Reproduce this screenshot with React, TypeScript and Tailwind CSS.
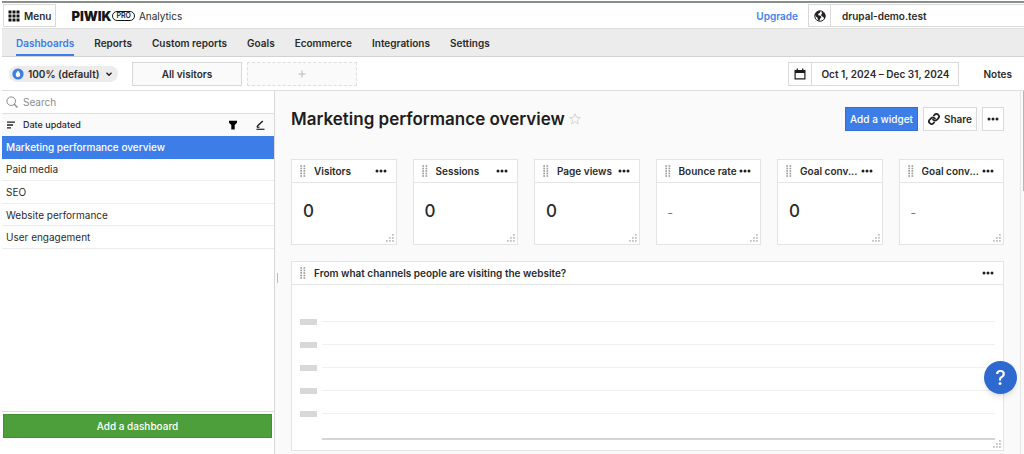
import React from "react";

const tabs = ["Dashboards", "Reports", "Custom reports", "Goals", "Ecommerce", "Integrations", "Settings"];
const dashboards = ["Marketing performance overview", "Paid media", "SEO", "Website performance", "User engagement"];
const metrics = [
  { id: "visitors", title: "Visitors", value: "0" },
  { id: "sessions", title: "Sessions", value: "0" },
  { id: "page-views", title: "Page views", value: "0" },
  { id: "bounce-rate", title: "Bounce rate", value: "-" },
  { id: "goal-conversions", title: "Goal conv...", value: "0" },
  { id: "goal-conversion-rate", title: "Goal conv...", value: "-" },
];

const Dots = () => (
  <svg viewBox="0 0 12 4" className="block h-1 w-3" fill="#1f1f1f" aria-hidden="true">
    <circle cx="2" cy="2" r="1.5" />
    <circle cx="6" cy="2" r="1.5" />
    <circle cx="10" cy="2" r="1.5" />
  </svg>
);

const Grip = () => (
  <svg viewBox="0 0 6 12" className="mr-2 block h-3 w-1.5 shrink-0" fill="#9b9b9b" aria-hidden="true">
    {[0, 2.5, 5, 7.5, 10].map((y) => (
      <React.Fragment key={y}>
        <rect x="0.3" y={y + 0.2} width="1.7" height="1.6" />
        <rect x="3.5" y={y + 0.2} width="1.7" height="1.6" />
      </React.Fragment>
    ))}
  </svg>
);

const Resize = () => (
  <svg viewBox="0 0 8 8" className="absolute right-0.5 bottom-0.5 h-2 w-2" fill="#c4c4c4" aria-hidden="true">
    {[[6, 0], [3, 3], [6, 3], [0, 6], [3, 6], [6, 6]].map(([x, y]) => (
      <rect key={`${x}-${y}`} x={x} y={y} width="1.8" height="1.8" />
    ))}
  </svg>
);

function Card({ title, children }: { title: string; children: React.ReactNode }) {
  return (
    <section className="relative min-w-0 border border-[#e4e4e4] bg-white">
      <header className="flex h-[23px] items-center border-b border-[#e4e4e4] pr-[9px] pl-2">
        <Grip />
        <h2 className="min-w-0 flex-1 truncate text-[10px] font-semibold">{title}</h2>
        <button type="button" aria-label="Widget options"><Dots /></button>
      </header>
      {children}
      <Resize />
    </section>
  );
}

function Logo() {
  return (
    <div className="flex items-center gap-px text-[#161616]">
      <span className="text-[13px] font-black">PIWIK</span>
      <span className="flex h-2.5 items-center rounded-full border border-[#161616] px-[3px] text-[7px] font-semibold">PRO</span>
    </div>
  );
}

export default function App() {
  return (
    <div className="flex min-h-screen flex-col bg-white pl-0.5 font-['Inter',sans-serif] text-[10px] leading-4 text-[#2b2b2b]">
      <header className="mt-px flex h-7 items-center border-t-2 border-b border-t-[#898f8b] border-b-[#dedede]">
        <button type="button" className="ml-px flex h-[23px] items-center gap-1 border border-[#dadada] px-1 font-semibold">
          <svg viewBox="0 0 12 12" className="h-3 w-3" fill="#111" aria-hidden="true">
            {[0.5, 4.5, 8.5].map((y) => [0.5, 4.5, 8.5].map((x) => <rect key={`${x}-${y}`} x={x} y={y} width="3" height="3" />))}
          </svg>
          Menu
        </button>
        <div className="ml-[15px] flex items-center gap-1">
          <Logo />
          <span>Analytics</span>
        </div>
        <a href="#upgrade" className="mr-2.5 ml-auto font-semibold text-[#3f83f1]">Upgrade</a>
        <button type="button" className="flex h-[23px] w-[216px] items-center border border-r-0 border-[#dadada] font-semibold">
          <span className="flex h-full w-[22px] items-center justify-center border-r border-[#dadada]">
            <svg viewBox="0 0 24 24" className="h-3 w-3" aria-hidden="true">
              <circle cx="12" cy="12" r="10.5" fill="#fff" stroke="#222" strokeWidth="2" />
              <path d="M2 9 5 4l6-2.500 2 2-2 3-3 1 1 3 4 1 2 3-3 3-1 4-3-1-1-5-4-3zM15 3l5 2.500L22.500 11 22 16l-2 2-1-4-3-1-2-3 2-3z" fill="#222" />
            </svg>
          </span>
          <span className="ml-[11px]">drupal-demo.test</span>
        </button>
      </header>

      <nav className="flex h-7 items-stretch gap-5 border-b border-[#d2d2d2] bg-[#ececec] pl-3.5">
        {tabs.map((tab, i) => (
          <a
            key={tab}
            href="#tab"
            className={i === 0 ? "flex items-center border-b-2 border-[#3c7de8] pt-0.5 font-semibold text-[#3c7de8]" : "flex items-center font-semibold"}
          >
            {tab}
          </a>
        ))}
      </nav>

      <div className="flex h-[34px] items-center border-b border-[#dedede] pl-[7px]">
        <button type="button" className="flex h-4 w-[109px] items-center gap-1 rounded-full bg-[#ececec] pr-[5px] pl-[3px] font-semibold">
          <svg viewBox="0 0 12 12" className="h-3 w-3 shrink-0" aria-hidden="true">
            <circle cx="6" cy="6" r="5.6" fill="#3c7de8" />
            <path d="M6 2.4C7.2 4.2 8.3 5.4 8.3 6.8a2.3 2.3 0 0 1-4.6 0C3.7 5.4 4.8 4.2 6 2.4z" fill="#fff" />
          </svg>
          100% (default)
          <svg viewBox="0 0 8 8" className="ml-auto h-2 w-2 shrink-0" fill="none" stroke="#222" strokeWidth="1.4" aria-hidden="true"><path d="M1.5 2.8 4 5.3 6.500 2.800" /></svg>
        </button>
        <button type="button" className="ml-3.5 h-6 w-[110px] border border-[#d8d8d8] bg-[#fafafa] font-semibold">All visitors</button>
        <button type="button" aria-label="Add segment" className="ml-[5px] flex h-6 w-[110px] items-center justify-center border border-dashed border-[#dedede] bg-[#fafafa]">
          <svg viewBox="0 0 8 8" className="h-2 w-2" stroke="#b8b8b8" strokeWidth="1" aria-hidden="true"><path d="M4 .5v7M.5 4h7" /></svg>
        </button>
        <button type="button" className="mr-6 ml-auto flex h-6 items-center border border-[#dadada] font-semibold">
          <span className="flex h-full w-[23px] items-center justify-center border-r border-[#dadada]">
            <svg viewBox="0 0 12 12" className="h-3 w-3" aria-hidden="true">
              <path d="M.5 2h11v9.500H.5zM1.700 5v5.300h8.600V5z" fill="#1c1c1c" fillRule="evenodd" />
              <path d="M3.300.500v2M8.700.500v2" stroke="#1c1c1c" strokeWidth="1.300" />
            </svg>
          </span>
          <span className="px-[9px]">Oct 1, 2024 – Dec 31, 2024</span>
        </button>
        <a href="#notes" className="mr-3 font-semibold">Notes</a>
      </div>

      <div className="flex flex-1">
        <aside className="flex w-[273px] shrink-0 flex-col border-r border-[#d8d8d8]">
          <label className="flex h-[23px] items-center gap-[5px] border-b border-[#dedede] pl-1">
            <svg viewBox="0 0 12 12" className="h-3 w-3" fill="none" stroke="#888" aria-hidden="true">
              <circle cx="5.2" cy="5.2" r="4.3" />
              <path d="m8.300 8.300 3.200 3.200" strokeWidth="1.3" />
            </svg>
            <input type="text" placeholder="Search" aria-label="Search" className="min-w-0 flex-1 bg-transparent text-[10px] outline-none placeholder:text-[#8b8b8b]" />
          </label>
          <div className="flex h-[22px] items-center bg-[#fafafa] pr-[9px] pl-[5px]">
            <button type="button" className="flex items-center gap-2 text-[9px] font-medium">
              <svg viewBox="0 0 8 8" className="h-2 w-2" stroke="#222" strokeWidth="1.3" aria-hidden="true"><path d="M0 1.200h8M0 4h6M0 6.800h4" /></svg>
              Date updated
            </button>
            <button type="button" aria-label="Filter" className="ml-auto">
              <svg viewBox="0 0 10 10" className="block h-2.5 w-2.5" fill="#000" aria-hidden="true"><path d="M1 .8h8v2L6.700 5v4.500H3.300V5L1 2.800z" /></svg>
            </button>
            <button type="button" aria-label="Edit" className="ml-[17px]">
              <svg viewBox="0 0 10 10" className="block h-2.5 w-2.5" fill="none" stroke="#222" aria-hidden="true"><path d="M1.500 9.300H9.500" strokeWidth="1.200" /><path d="M2 7.300 3 5.500 7.800 1" strokeWidth="1.500" /><path d="M2 7.300h2.500" /></svg>
            </button>
          </div>
          <ul className="grid h-[113px] grid-rows-5">
            {dashboards.map((name, i) => (
              <li key={name}>
                <a
                  href="#dashboard"
                  className={i === 0 ? "flex h-full items-center bg-[#3c7de8] pl-1 font-medium text-white" : "flex h-full items-center border-b border-[#ededed] pl-1"}
                >
                  {name}
                </a>
              </li>
            ))}
          </ul>
          <div className="mt-auto border-t border-[#dedede] pt-0.5 pr-0.5 pb-4 pl-px">
            <button type="button" className="h-6 w-full border border-[#439034] bg-[#4c9f3b] font-medium text-white">Add a dashboard</button>
          </div>
        </aside>

        <main className="relative min-w-0 flex-1 bg-[#fafafa] pr-5 pl-4">
          <div className="absolute top-1/2 left-0.5 h-2.5 w-px bg-[#bdbdbd]" />
          <div className="absolute top-0 right-[3px] h-full w-px bg-[#e6e6e6]" />
          <div className="absolute top-0 right-0 h-[100px] w-px bg-[#b5b5b5]" />
          <div className="flex items-center gap-1 pt-4">
            <h1 className="text-[17px] leading-6 font-semibold text-[#1d1d1d]">Marketing performance overview</h1>
            <button type="button" aria-label="Favorite">
              <svg viewBox="0 0 12 12" className="block h-3 w-3" fill="none" stroke="#cfcfcf" strokeWidth="0.9" aria-hidden="true"><path d="m6 .8 1.500 3.500 3.800.3-2.900 2.500.9 3.700L6 8.800l-3.300 2 .9-3.700L.7 4.600l3.800-.3z" /></svg>
            </button>
            <div className="ml-auto flex gap-[5px]">
              <button type="button" className="h-6 border border-[#326fd6] bg-[#3c7de8] px-1 font-medium text-white">Add a widget</button>
              <button type="button" className="flex h-6 items-center gap-1 border border-[#dadada] bg-white px-1 font-semibold">
                <svg viewBox="0 0 24 24" className="h-3 w-3" fill="none" stroke="#222" strokeWidth="3.5" strokeLinecap="round" aria-hidden="true">
                  <path d="M10 13a5 5 0 0 0 7.540.540l3-3a5 5 0 0 0-7.070-7.070l-1.720 1.710" />
                  <path d="M14 11a5 5 0 0 0-7.540-.540l-3 3a5 5 0 0 0 7.070 7.070l1.710-1.710" />
                </svg>
                Share
              </button>
              <button type="button" aria-label="More options" className="flex h-6 items-center border border-[#dadada] bg-white px-1"><Dots /></button>
            </div>
          </div>

          <div className="mt-7 grid grid-cols-6 gap-4">
            {metrics.map(({ id, title, value }) => (
              <Card key={id} title={title}>
                <p className={value === "0" ? "h-[61px] pt-4 pl-[11px] text-[17px] leading-6 font-medium" : "h-[61px] pt-5 pl-[11px] text-[12px] leading-5 text-[#777]"}>{value}</p>
              </Card>
            ))}
          </div>

          <div className="mt-4">
            <Card title="From what channels people are visiting the website?">
              <div className="h-[165px] px-2 pt-[25px]">
                {[0, 1, 2, 3, 4].map((row) => (
                  <div key={row} className="flex h-[23px] items-center gap-[5px]">
                    <span className="h-1.5 w-[17px] bg-[#d8d8d8]" />
                    <span className="h-px flex-1 bg-[#f0f0f0]" />
                  </div>
                ))}
                <div className="mt-[13px] ml-[22px] h-0.5 bg-[#d4d6d5]" />
              </div>
            </Card>
          </div>
        </main>
      </div>

      <button type="button" aria-label="Help" className="fixed right-[7px] bottom-[60px] flex h-[33px] w-[33px] items-center justify-center rounded-full bg-[#2d69cf] text-[20px] font-medium text-white shadow-md">?</button>
    </div>
  );
}
